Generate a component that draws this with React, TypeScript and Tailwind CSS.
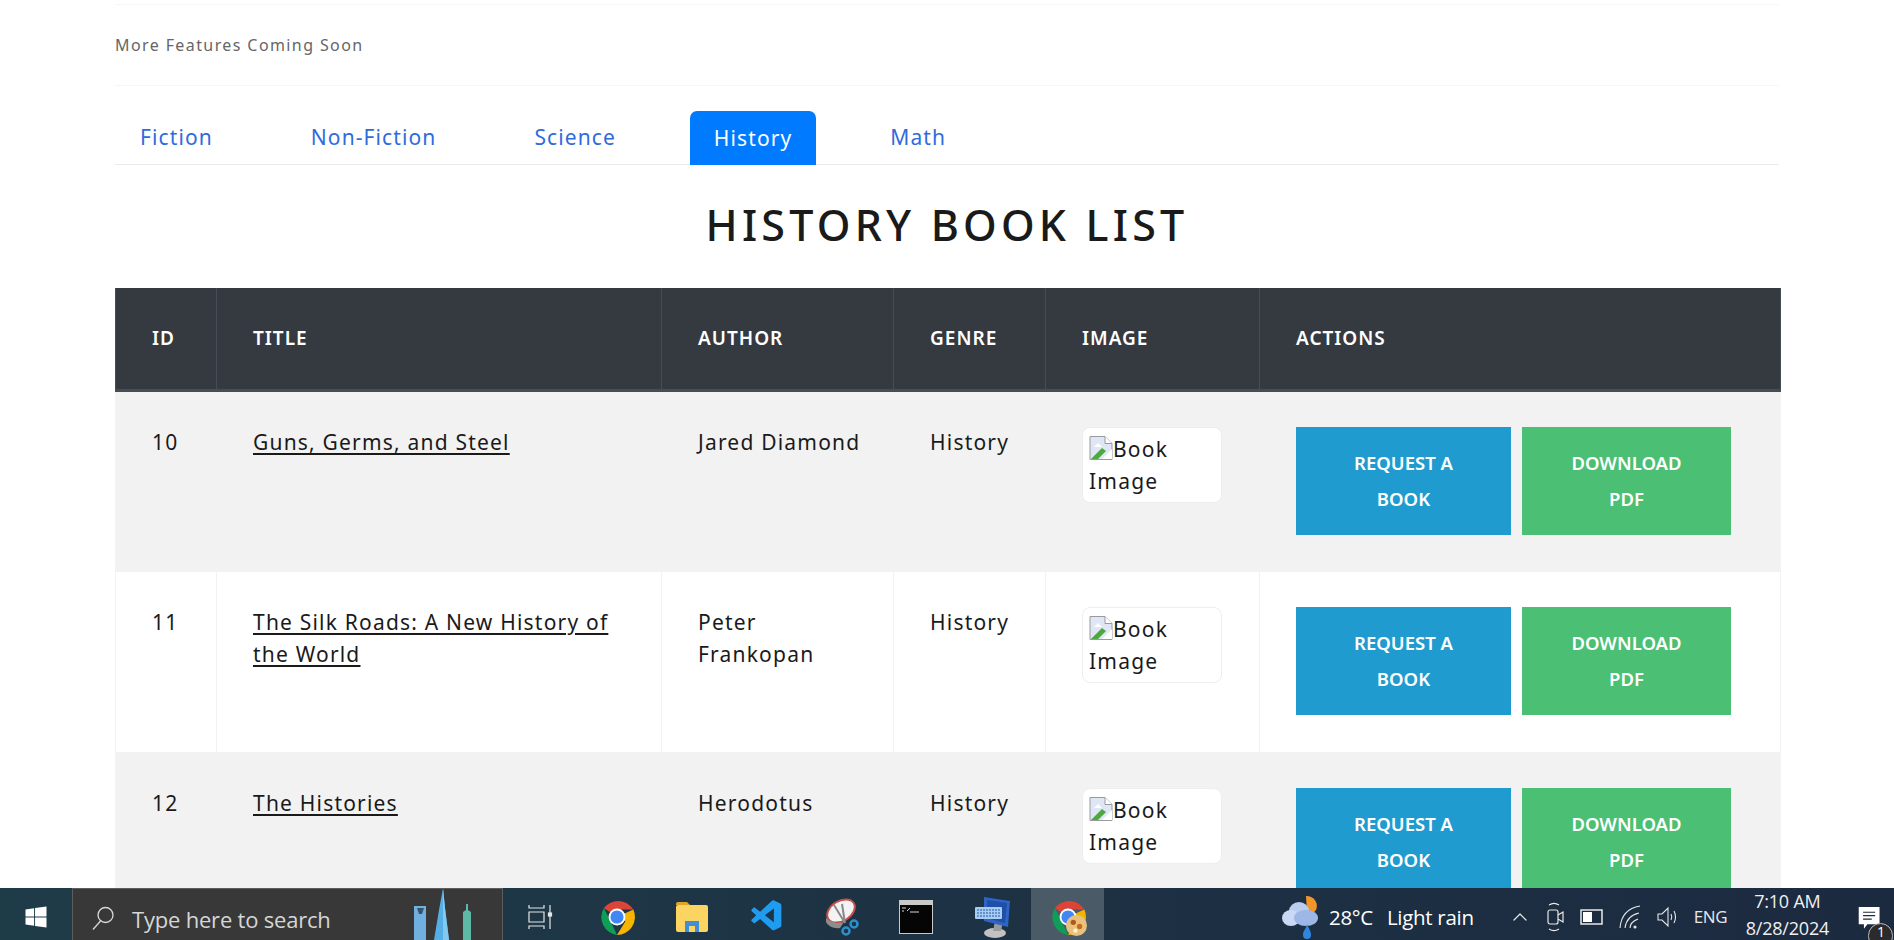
import React from 'react';
import { FaWindows } from 'react-icons/fa';
import { VscVscode } from 'react-icons/vsc';
import { ChevronUp } from 'lucide-react';

type Book = { id: number; title: string[]; author: string[] };

const books: Book[] = [
  { id: 10, title: ['Guns, Germs, and Steel'], author: ['Jared Diamond'] },
  { id: 11, title: ['The Silk Roads: A New History of', 'the World'], author: ['Peter', 'Frankopan'] },
  { id: 12, title: ['The Histories'], author: ['Herodotus'] },
];

const tabs = ['Fiction', 'Non-Fiction', 'Science', 'History', 'Math'];
const headers = ['ID', 'TITLE', 'AUTHOR', 'GENRE', 'IMAGE', 'ACTIONS'];

const BrokenImage = () => (
  <svg width="24" height="24" viewBox="0 0 24 24" className="inline-block align-[-3px]">
    <path d="M1 .5h15l7 7V23.500H1z" fill="#dfe6f5" stroke="#9a9a9a" />
    <path d="M16 .5v7h7" fill="#fff" stroke="#9a9a9a" />
    <path d="M5 11l4-4 4 4z" fill="#fff" />
    <path d="M2 23l11-11 4 3-8 8z" fill="#4fa83d" />
    <path d="M13 23l10-10v10z" fill="#fff" />
  </svg>
);

const Chrome = ({ overlay }: { overlay?: boolean }) => (
  <svg width="38" height="38" viewBox="0 0 36 36">
    <path d="M18 18L5.500 9.500A17 17 0 0 1 33.500 11H18z" fill="#db4437" />
    <path d="M18 18l15.500-7A17 17 0 0 1 18 35l8-13z" fill="#f4b400" />
    <path d="M18 35A17 17 0 0 1 5.500 9.500L12 22z" fill="#0f9d58" />
    <circle cx="18" cy="18" r="8" fill="#fff" />
    <circle cx="18" cy="18" r="6.200" fill="#4285f4" />
    {overlay && (
      <>
        <circle cx="26" cy="26" r="10" fill="#e8c27c" />
        <circle cx="23" cy="23" r="2.500" fill="#b4541e" />
        <circle cx="29" cy="27" r="2.500" fill="#c9691f" />
        <circle cx="25" cy="31" r="2" fill="#fff3d6" />
      </>
    )}
  </svg>
);

const Folder = () => (
  <svg width="32" height="33" viewBox="0 0 32 33">
    <path d="M0 4a2 2 0 0 1 2-2h9l3 3h-14z" fill="#e0a526" />
    <rect x="0" y="5" width="32" height="27" rx="2" fill="#fcd462" />
    <path d="M9 32V21h14v11h-4v-6h-6v6z" fill="#3f8fd8" />
  </svg>
);

const Snip = () => (
  <svg width="36" height="38" viewBox="0 0 36 38">
    <ellipse cx="17" cy="13" rx="15" ry="10" transform="rotate(-32 17 13)" fill="#f3f3f3" stroke="#c4504f" strokeWidth="2" />
    <path d="M2 20c6 5 12 6 18 4l-4 6c-6 1-12-2-14-6z" fill="#8d8d8d" />
    <path d="M10 7l11 18M18 6l3 19" stroke="#8a8a8a" strokeWidth="2" />
    <circle cx="22" cy="33" r="3.500" fill="none" stroke="#2e8fcf" strokeWidth="2.500" />
    <circle cx="30" cy="26" r="3.500" fill="none" stroke="#2e8fcf" strokeWidth="2.500" />
  </svg>
);

const Terminal = () => (
  <svg width="34" height="34" viewBox="0 0 34 34">
    <rect width="34" height="34" fill="#c9c9c9" />
    <rect x="1" y="5" width="32" height="28" fill="#050505" />
    <path d="M3 8h4M3 11h2M8 11l3-3M11 12h9" stroke="#d8d8d8" strokeWidth="1" />
  </svg>
);

const KeyboardPc = () => (
  <svg width="36" height="44" viewBox="0 0 36 44">
    <ellipse cx="20" cy="38" rx="11" ry="5" fill="#c2c2c2" />
    <path d="M20 26l8 0-2 10h-8z" fill="#9a9a9a" />
    <path d="M9 2l26 4-2 26-24-6z" fill="#2d64c6" />
    <path d="M12 5l20 3-2 20-18-5z" fill="#1f4fa8" />
    <rect x="0" y="12" width="27" height="12" rx="1" fill="#a9cdf2" />
    <path d="M2 15h23M2 18h23M2 21h23" stroke="#4e7fc0" strokeWidth="1.500" strokeDasharray="2 1" />
  </svg>
);

const WeatherIcon = () => (
  <svg width="38" height="48" viewBox="0 0 38 48">
    <path d="M24 3a10 10 0 0 1 10 14c-2 3-6 4-9 3z" fill="#f2962a" />
    <ellipse cx="17" cy="18" rx="10" ry="9" fill="#b9cdf0" />
    <ellipse cx="9" cy="25" rx="9" ry="8" fill="#c9d8f3" />
    <ellipse cx="24" cy="25" rx="12" ry="8" fill="#9db8e6" />
    <path d="M25 31c2 5 4 7 4 11a4 4 0 0 1-8 0c0-4 3-6 4-11z" fill="#2f86e0" />
  </svg>
);

const Skyline = () => (
  <svg width="70" height="52" viewBox="0 0 70 52" className="self-end">
    <path d="M4 52V18h12v34z" fill="#6fb0de" />
    <path d="M7 20h7l-2 6h-3z" fill="#39546a" />
    <path d="M33 0l2 20 4 32H24l5-30z" fill="#55aee6" />
    <path d="M33 0l2 20 4 32h-6z" fill="#82c9ef" />
    <path d="M56 16h2v6l3 2v28h-8V24l3-2z" fill="#5eb8a6" />
  </svg>
);

const TaskIcon = ({ className, children }: { className: string; children: React.ReactNode }) => (
  <div className={`flex h-full items-center justify-center pt-[5px] ${className}`}>{children}</div>
);

const Taskbar = () => (
  <div className="flex h-[52px] shrink-0 items-stretch bg-gradient-to-r from-[#1e3b48] to-[#1c2a40] font-['Open_Sans',sans-serif] text-white">
    <div className="flex w-[72px] items-center justify-center pt-[6px]">
      <FaWindows className="h-[24px] w-[24px] text-white" />
    </div>
    <div className="flex w-[431px] items-center overflow-hidden border-x border-t border-[#5d5d5d] bg-[#383838] pl-[18px] pr-[22px] pt-[6px]">
      <svg width="24" height="24" viewBox="0 0 24 24" fill="none" stroke="#d8d8d8" strokeWidth="1.300">
        <circle cx="14.500" cy="9" r="7.500" />
        <path d="M9.500 15L2 23.500" />
      </svg>
      <span className="ml-[17px] flex-1 pt-[3px] text-[22px] leading-[30px] tracking-[-0.2px] text-[#d6d6d6]">Type here to search</span>
      <Skyline />
    </div>
    <div className="flex h-full flex-1 items-stretch">
      <TaskIcon className="w-[76px]">
        <svg width="26" height="26" viewBox="0 0 26 26" fill="none" stroke="#e6e6e6" strokeWidth="1.200">
          <path d="M1 1v3h15V1M1 25v-3h15v3M1 8h15v10H1zM22 1v24" />
          <rect x="20.500" y="9" width="3" height="3" fill="#e6e6e6" />
        </svg>
      </TaskIcon>
      <TaskIcon className="w-[76px]"><Chrome /></TaskIcon>
      <TaskIcon className="w-[74px]"><Folder /></TaskIcon>
      <TaskIcon className="w-[76px]"><VscVscode className="h-[37px] w-[37px] text-[#1f9cf0]" /></TaskIcon>
      <TaskIcon className="w-[73px]"><Snip /></TaskIcon>
      <TaskIcon className="w-[76px]"><Terminal /></TaskIcon>
      <TaskIcon className="w-[77px]"><KeyboardPc /></TaskIcon>
      <TaskIcon className="w-[73px] bg-[#4a5a66]"><Chrome overlay /></TaskIcon>
      <div className="ml-[178px] flex items-center pt-[6px]">
        <WeatherIcon />
        <span className="ml-[9px] text-[20.500px] leading-[30px] tracking-[-0.3px]">28°C</span>
        <span className="ml-[14px] text-[20.500px] leading-[30px] tracking-[-0.3px]">Light rain</span>
      </div>
      <div className="ml-[34px] flex items-center gap-[14px] pt-[5px] text-[#e8e8e8]">
        <ChevronUp className="h-[24px] w-[24px]" strokeWidth={1.200} />
        <svg width="20" height="30" viewBox="0 0 20 30" fill="none" stroke="#e8e8e8" strokeWidth="1.200">
          <path d="M3 3c3-2 7-2 10 0M3 27c3 2 7 2 10 0" />
          <rect x="2" y="8" width="10" height="14" rx="2" />
          <path d="M12 13l5-3v10l-5-3" />
        </svg>
        <svg width="24" height="18" viewBox="0 0 24 18">
          <rect x="1" y="2" width="21" height="14" fill="#1c2c3e" stroke="#e8e8e8" strokeWidth="1.500" />
          <rect x="3" y="4" width="9" height="10" fill="#fff" />
        </svg>
        <svg width="24" height="26" viewBox="0 0 24 26" fill="none" stroke="#e8e8e8" strokeWidth="1.100">
          <path d="M2 24C3 12 10 4 22 2M7 24c1-8 5-13 14-15M12 24c0-4 3-7 8-9" />
          <circle cx="17" cy="23" r="1" fill="#e8e8e8" />
        </svg>
        <svg width="24" height="24" viewBox="0 0 24 24" fill="none" stroke="#e8e8e8" strokeWidth="1.100">
          <path d="M2 9h4l6-6v18l-6-6H2zM15 9c1 2 1 4 0 6M18 6c2 4 2 8 0 12" />
        </svg>
        <span className="text-[17px] tracking-[-0.3px]">ENG</span>
      </div>
      <div className="ml-[5px] flex w-[110px] flex-col items-center justify-end gap-[7px] pb-[2px] text-[18px] leading-[20px] tracking-[-0.2px] text-[#f0f0f0]">
        <span>7:10 AM</span>
        <span>8/28/2024</span>
      </div>
      <div className="relative ml-[9px] w-[42px]">
        <svg width="24" height="26" viewBox="0 0 26 30" className="absolute left-[7px] top-[19px]">
          <path d="M0 0h24v20h-14l-4 5v-5H0z" fill="#fff" />
          <path d="M5 6h14M5 10h14M5 14h10" stroke="#1c2c3e" strokeWidth="1.300" />
        </svg>
        <span className="absolute left-[17px] top-[35px] flex h-[26px] w-[25px] justify-center rounded-full border border-[#bbb] bg-[#2b2b2b] text-[14px] leading-[15px] text-white">1</span>
      </div>
    </div>
  </div>
);

const App: React.FC = () => {
  return (
    <div className="flex h-screen flex-col overflow-hidden bg-white font-['Noto_Sans',sans-serif]">
      <div className="min-h-0 flex-1 overflow-hidden px-[115px] pt-[4px]">
        <div className="flex h-[82px] items-center border-y border-[#f6f6f6] pb-[1px] text-[16px] tracking-[1.400px] text-[#666666]">
          More Features Coming Soon
        </div>

        <div className="mt-[25px] flex h-[54px] gap-[50px] border-b border-[#e9ecef] pl-[1px] text-[21px] tracking-[1.100px]">
          {tabs.map((tab) => (
            <div
              key={tab}
              className={
                tab === 'History'
                  ? 'flex h-[54px] items-center rounded-t-[7px] bg-[#007bff] px-[24px] pt-[1px] text-white'
                  : 'flex h-[53px] items-center px-[24px] pt-[1px] text-[#2f6bdc]'
              }
            >
              {tab}
            </div>
          ))}
        </div>

        <h1 className="mt-[35px] text-center text-[43px] font-medium leading-[50px] tracking-[4.200px] text-[#1a1a1a]">
          HISTORY BOOK LIST
        </h1>

        <table className="mt-[38px] w-[1665px] table-fixed border-collapse text-[21px] leading-[32px] tracking-[1.200px] text-[#1a1a1a]">
          <colgroup>
            <col className="w-[101px]" />
            <col className="w-[445px]" />
            <col className="w-[232px]" />
            <col className="w-[152px]" />
            <col className="w-[214px]" />
            <col className="w-[521px]" />
          </colgroup>
          <thead>
            <tr className="h-[102px] border-b-[3px] border-[#454d55] bg-[#343a40] text-white">
              {headers.map((h) => (
                <th key={h} className="border-x border-[#454d55] pl-[36px] text-left text-[19px] font-semibold tracking-[1px]">
                  {h}
                </th>
              ))}
            </tr>
          </thead>
          <tbody>
            {books.map((book, i) => {
              const cell = 'h-[181px] border border-[#f2f2f2] align-top pl-[36px] pt-[34px]';
              return (
                <tr key={book.id} className={i % 2 === 0 ? 'bg-[#f2f2f2]' : 'bg-white'}>
                  <td className={cell}>{book.id}</td>
                  <td className={cell}>
                    {book.title.map((line) => (
                      <div key={line}><span className="underline underline-offset-[3px]">{line}</span></div>
                    ))}
                  </td>
                  <td className={cell}>
                    {book.author.map((line) => (
                      <div key={line}>{line}</div>
                    ))}
                  </td>
                  <td className={cell}>History</td>
                  <td className={cell}>
                    <div className="mt-[1px] h-[76px] w-[140px] rounded-[8px] border border-[#eeeeee] bg-white pb-[4px] pl-[6px] pr-[4px] pt-[5px]">
                      <BrokenImage />Book Image
                    </div>
                  </td>
                  <td className={cell}>
                    <div className="mt-[1px] flex gap-[11px] text-center text-[18.500px] font-semibold leading-[36px] tracking-normal text-white">
                      <div className="h-[108px] w-[215px] bg-[#1f9bcf] px-[40px] py-[18px]">REQUEST A BOOK</div>
                      <div className="h-[108px] w-[209px] bg-[#4bbf73] px-[40px] py-[18px]">DOWNLOAD PDF</div>
                    </div>
                  </td>
                </tr>
              );
            })}
          </tbody>
        </table>
      </div>
      <Taskbar />
    </div>
  );
};

export default App;
